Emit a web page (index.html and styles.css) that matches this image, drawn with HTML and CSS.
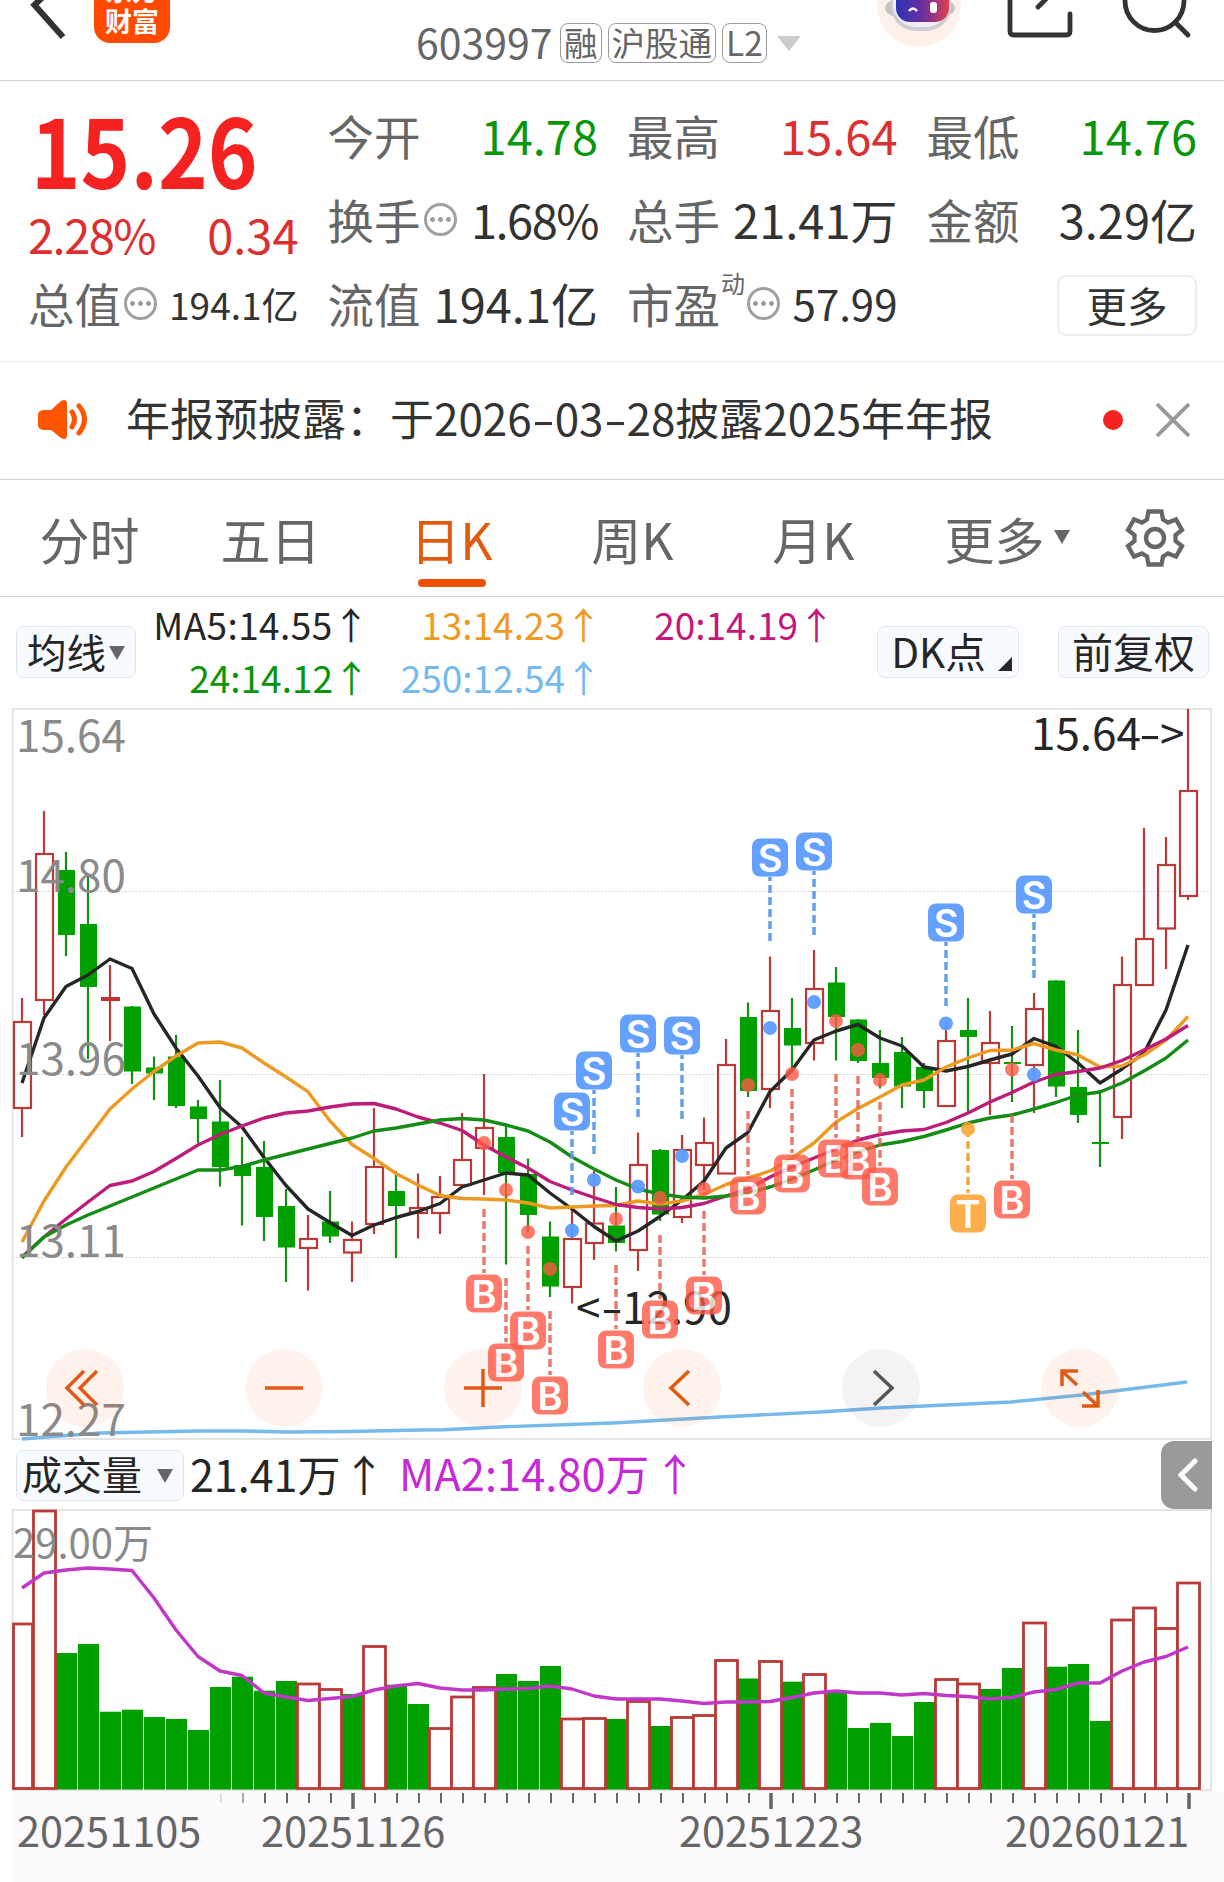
FILE: index.html
```html
<!DOCTYPE html>
<html lang="zh-CN">
<head>
    <meta charset="UTF-8">
    <meta name="viewport" content="width=device-width, initial-scale=1.0">
    <title>603997</title>
    <link rel="stylesheet" href="styles.css">
</head>
<body>
    <header class="topbar">
        <svg class="back" width="52" height="80" viewBox="0 0 52 80"><path d="M45 -22 L17.500 5 L46 37" /></svg>
        <div class="logo">东方<br>财富</div>
        <div class="stock">
            <span class="code">603997</span>
            <span class="tag">融</span>
            <span class="tag">沪股通</span>
            <span class="tag">L2</span>
            <i class="tri tri-light"></i>
        </div>
        <svg class="tools" width="324" height="80" viewBox="876 0 324 80">
            <defs>
                <linearGradient id="visor" x1="0" x2="1" y1="0" y2="0">
                    <stop offset="0" stop-color="#2a35b5" />
                    <stop offset=".5" stop-color="#6a2da0" />
                    <stop offset="1" stop-color="#e0404e" />
                </linearGradient>
            </defs>
            <circle cx="919" cy="5" r="42" fill="#fff0e9" />
            <ellipse cx="920" cy="8" rx="35" ry="13" fill="#c4c0c8" />
            <rect x="891" y="-28" width="60" height="59" rx="25" fill="#cfccd3" />
            <rect x="893" y="-28" width="56" height="55" rx="23" fill="#efedf2" />
            <rect x="896" y="-16" width="53" height="38" rx="14" fill="url(#visor)" />
            <path d="M909 11 Q913 6 917 11" fill="none" stroke="#fff" stroke-width="2.5" />
            <rect x="930" y="2" width="7" height="11" rx="3" fill="#fff" />
            <g class="tool-line">
                <path d="M1010 -6 V31 Q1010 35 1014 35 H1066 Q1070 35 1070 31 V14" />
                <path d="M1038 7 L1056 -11" />
                <circle cx="1154.500" cy="1" r="29.500" />
                <path d="M1175 22 L1188 35" />
            </g>
        </svg>
    </header>

    <section class="quote">
        <div class="price-box">
            <div class="price">15.26</div>
            <div class="change"><span class="pct">2.28%</span><span>0.34</span></div>
        </div>
        <div class="cell"><label>今开</label><b class="down">14.78</b></div>
        <div class="cell"><label>最高</label><b class="up">15.64</b></div>
        <div class="cell"><label>最低</label><b class="down">14.76</b></div>
        <div class="cell"><label>换手</label><i class="more"></i><b class="pct">1.68%</b></div>
        <div class="cell"><label>总手</label><b>21.41万</b></div>
        <div class="cell"><label>金额</label><b>3.29亿</b></div>
        <div class="cell"><label>总值</label><i class="more"></i><b class="small">194.1亿</b></div>
        <div class="cell"><label>流值</label><b>194.1亿</b></div>
        <div class="cell"><label>市盈</label><sup>动</sup><i class="more"></i><b class="mid">57.99</b></div>
        <div class="cell"><button class="more-btn">更多</button></div>
    </section>

    <section class="notice">
        <svg width="52" height="42" viewBox="0 0 52 42">
            <path d="M8 11 H14 L24 2 Q30 -1 30 5 V36 Q30 42 24 39 L14 31 H8 Q1 31 1 26 V16 Q1 11 8 11Z" fill="#ff5500" />
            <path d="M35 13 Q40 20 35 28 M42 7 Q53 20 42 34" fill="none" stroke="#ff5500" stroke-width="5" stroke-linecap="round" />
        </svg>
        <p>年报预披露：于2026<i>-</i>03<i>-</i>28披露2025年年报</p>
        <span class="dot"></span>
        <svg width="34" height="34" viewBox="0 0 34 34"><path d="M1 1 L33 33 M33 1 L1 33" stroke="#999" stroke-width="3.800" /></svg>
    </section>

    <nav class="tabs">
        <a>分时</a>
        <a>五日</a>
        <a class="active">日K</a>
        <a>周K</a>
        <a>月K</a>
        <a class="drop">更多<i class="tri"></i></a>
        <svg width="60" height="60" viewBox="-30 -30 60 60">
            <path d="M-6.500 -26.500 H6.500 L8 -18.500 L13 -15.500 L21 -18.500 L27 -8 L20.500 -3 V3 L27 8 L21 18.500 L13 15.500 L8 18.500 L6.500 26.500 H-6.500 L-8 18.500 L-13 15.500 L-21 18.500 L-27 8 L-20.500 3 V-3 L-27 -8 L-21 -18.500 L-13 -15.500 L-8 -18.500 Z" />
            <circle r="9" />
        </svg>
    </nav>

    <section class="legend">
        <button class="chip">均线<i class="tri"></i></button>
        <div class="ma-list">
            <span class="ma5">MA5:14.55↑</span>
            <span class="ma13">13:14.23↑</span>
            <span class="ma20">20:14.19↑</span>
            <span class="ma24">24:14.12↑</span>
            <span class="ma250">250:12.54↑</span>
        </div>
        <button class="chip dk">DK点<i class="corner"></i></button>
        <button class="chip fq">前复权</button>
    </section>

    <section class="kline">
        <svg id="kline" width="1224" height="741" viewBox="0 700 1224 741"></svg>
        <div class="controls">
            <button><svg viewBox="-39 -39 78 78"><path d="M-1 -17 L-18 0 L-1 17 M12 -17 L-5 0 L12 17" /></svg></button>
            <button><svg viewBox="-39 -39 78 78"><path d="M-19 0 H19" /></svg></button>
            <button><svg viewBox="-39 -39 78 78"><path d="M-19 0 H19 M0 -19 V19" /></svg></button>
            <button><svg viewBox="-39 -39 78 78"><path d="M7 -17 L-11 0 L7 17" /></svg></button>
            <button class="off"><svg viewBox="-39 -39 78 78"><path d="M-7 -17 L11 0 L-7 17" /></svg></button>
            <button><svg viewBox="-39 -39 78 78"><path d="M-2 -17 H-18 V-2 M-18 -17 L-3 -3 M2 18 H18 V2 M18 18 L3 4" /></svg></button>
        </div>
    </section>

    <section class="vol-head">
        <button class="chip">成交量<i class="tri"></i></button>
        <span class="vol">21.41万<i>↑</i></span>
        <span class="vol-ma">MA2:14.80万<i>↑</i></span>
        <button class="fold"><svg width="51" height="68" viewBox="0 0 51 68"><path d="M34 20 L20 34 L34 48" /></svg></button>
    </section>
    <svg id="volume" width="1224" height="373" viewBox="0 1509 1224 373"></svg>

    <script src="chart.js"></script>
</body>
</html>
```
FILE: styles.css
```css
*{
    margin: 0;
    padding: 0;
    box-sizing: border-box;
}
body{
    width: 1224px;
    height: 1882px;
    overflow: hidden;
    background: #fff;
    color: #333;
    font-family: "Noto Sans CJK SC", "Noto Sans", sans-serif;
}
button{
    font-family: inherit;
    border: 0;
}
svg{
    display: block;
}
i, b, label{
    font-style: normal;
    font-weight: 400;
}
.tri{
    display: inline-block;
    border: 8.5px solid transparent;
    border-top: 14px solid #666;
    border-bottom: 0;
}
.tri-light{
    border-width: 15px 12px 0;
    border-top-color: #ccc;
    margin-left: 4px;
}

/* top bar, scrolled a little under the screen edge */
.topbar{
    display: flex;
    height: 81px;
    padding-left: 17px;
    border-bottom: 1px solid #d2d2d2;
    overflow: hidden;
}
.back path{
    fill: none;
    stroke: #333;
    stroke-width: 6.2;
}
.logo{
    width: 76px;
    height: 76px;
    margin: -33px 0 0 25px;
    padding-top: 7px;
    border-radius: 16px;
    background: #ff4a00;
    color: #fff;
    font-size: 27px;
    font-weight: 700;
    line-height: 31px;
    text-align: center;
}
.stock{
    display: flex;
    align-items: center;
    gap: 6px;
    width: 458px;
    height: 86px;
    margin-left: 246px;
    color: #666;
}
.code{
    width: 138px;
    padding-bottom: 4px;
    font-size: 41px;
}
.tag{
    height: 40px;
    padding: 0 3px;
    border: 1.5px solid #999;
    border-radius: 8px;
    font-size: 33.5px;
    line-height: 35px;
    white-space: nowrap;
}
.tools{
    margin-left: 2px;
}
.tool-line{
    fill: none;
    stroke: #333;
    stroke-width: 4.8;
    stroke-linecap: round;
}

.quote{
    display: grid;
    grid-template-columns: repeat(4, 270.5px);
    grid-template-rows: repeat(3, 84px);
    column-gap: 29px;
    height: 281px;
    padding: 14px 27px 14px 28px;
    border-bottom: 1px solid #ececec;
}
.price-box{
    grid-row: span 2;
    color: #dc2f2f;
}
.price{
    height: 106px;
    padding-left: 3px;
    color: #f52222;
    font-size: 95px;
    font-weight: 700;
    line-height: 105px;
    transform: scaleX(.89);
    transform-origin: left;
}
.change{
    display: flex;
    justify-content: space-between;
    font-size: 47px;
    line-height: 66px;
}
.cell{
    display: flex;
    align-items: center;
    font-size: 46.5px;
    white-space: nowrap;
}
.cell label, .cell b{
    padding-bottom: 5px;
}
.cell label{
    color: #666;
}
.cell b{
    margin-left: auto;
    font-size: 47px;
}
.cell b.small{
    padding-bottom: 2px;
    font-size: 37px;
}
.cell b.mid{
    font-size: 42px;
}
.pct, .cell b.pct{
    letter-spacing: -1.5px;
}
.cell sup{
    align-self: flex-start;
    margin: 2px 2px 0 1px;
    color: #666;
    font-size: 24px;
}
.cell .up{
    color: #dc2f2f;
}
.cell .down{
    color: #0a960a;
}
.more{
    width: 33px;
    height: 33px;
    margin: -3px 0 0 3px;
    border: 3px solid #a0a0a0;
    border-radius: 50%;
    background:
        radial-gradient(circle at 5.5px 13.5px, #999 2px, transparent 2.7px),
        radial-gradient(circle at 13.5px 13.5px, #999 2px, transparent 2.7px),
        radial-gradient(circle at 21.5px 13.5px, #999 2px, transparent 2.7px);
}
.cell sup + .more{
    margin-left: 0;
}
.more-btn{
    width: 140px;
    height: 61px;
    margin-left: auto;
    border: 2px solid #ececec;
    border-radius: 9px;
    background: #fff;
    color: #333;
    font-size: 40.5px;
    line-height: 50px;
}

.notice{
    display: flex;
    align-items: center;
    height: 118px;
    padding-left: 37px;
    border-bottom: 1px solid #d2d2d2;
    font-size: 44px;
}
.notice svg, .dot{
    position: relative;
    top: -1px;
}
.notice p{
    width: 977px;
    margin-left: 37px;
    padding-bottom: 7px;
    white-space: nowrap;
}
.notice p i{
    display: inline-block;
    width: 23px;
    text-align: center;
    transform: scaleX(1.5);
}
.dot{
    width: 20px;
    height: 20px;
    margin-right: 33px;
    border-radius: 50%;
    background: #f52222;
}

.tabs{
    display: grid;
    grid-template-columns: repeat(6, 181px) 1fr;
    align-items: center;
    height: 117px;
    border-bottom: 1px solid #d2d2d2;
    color: #666;
    font-size: 50px;
    line-height: 110px;
    text-align: center;
}
.tabs a{
    position: relative;
    left: -1px;
}
.tabs .active{
    color: #e35a0d;
}
.active::after{
    content: "";
    position: absolute;
    left: 57px;
    bottom: 6px;
    width: 68px;
    height: 8px;
    border-radius: 4px;
    background: #ef5000;
}
.drop .tri{
    position: absolute;
    right: 15px;
    top: 47px;
}
.tabs svg{
    margin-left: 39px;
    fill: none;
    stroke: #666;
    stroke-width: 4.3;
}

.chip{
    display: flex;
    align-items: center;
    justify-content: center;
    height: 52px;
    padding-bottom: 4px;
    border: 1.5px solid #e2e4ec;
    border-radius: 8px;
    background: #f7faff;
    color: #262626;
    font-size: 39.5px;
    white-space: nowrap;
}
.chip .tri{
    margin-top: 5px;
}
.legend{
    display: flex;
    height: 103px;
    padding: 3px 0 0 16px;
}
.legend .chip{
    width: 120px;
    margin-top: 26px;
}
.legend .chip .tri{
    margin-left: 3px;
}
.ma-list{
    display: grid;
    grid-template-columns: 234px 232px 233px;
    grid-template-rows: 53px 53px;
    width: 741px;
    font-size: 37px;
    line-height: 49px;
    text-align: right;
}
.ma5{ color: #262626; letter-spacing: .4px; }
.ma13{ color: #ee9a22; }
.ma20{ color: #c2187c; }
.ma24{ color: #0a960a; }
.ma250{ color: #76b9ec; }
.legend .dk{
    position: relative;
    width: 142px;
    padding-right: 19px;
    font-size: 40.5px;
}
.legend .fq{
    width: 151px;
    margin-left: 39px;
    font-size: 41px;
}
.corner{
    position: absolute;
    right: 6px;
    bottom: 6px;
    border-left: 14px solid transparent;
    border-bottom: 14px solid #262626;
}

.kline{
    position: relative;
    height: 741px;
}
.controls{
    position: absolute;
    left: 46px;
    bottom: 14px;
    display: flex;
    gap: 121px;
}
.controls button{
    width: 78px;
    height: 78px;
    border-radius: 50%;
    background: rgba(255, 80, 10, .075);
}
.controls .off{
    background: rgba(80, 40, 110, .06);
}
.controls path{
    fill: none;
    stroke: #e05a14;
    stroke-width: 3.5;
}
.controls .off path{
    stroke: #555;
}

.vol-head{
    display: flex;
    align-items: center;
    height: 68px;
    padding-left: 16px;
    font-size: 43px;
    white-space: nowrap;
}
.vol-head .chip{
    width: 168px;
    height: 51px;
    padding-right: 5px;
    font-size: 40px;
}
.vol-head .chip .tri{
    margin-left: 15px;
}
.vol{
    width: 209px;
    margin-left: 6px;
    padding-bottom: 5px;
    color: #262626;
}
.vol i{
    margin-left: 2px;
}
.vol-ma{
    padding-bottom: 5px;
    color: #c42bd6;
    font-size: 43.500px;
}
.vol-ma i{
    margin-left: 4px;
}
.fold{
    width: 51px;
    height: 68px;
    margin: 0 12px 0 auto;
    border-radius: 13px 0 0 13px;
    background: #9b999c;
}
.fold path{
    fill: none;
    stroke: #fff;
    stroke-width: 5;
    stroke-linecap: round;
}

/* text inside the charts */
.axis{
    fill: #8a8a8a;
    font-size: 44px;
}
.peak{
    fill: #262626;
    font-size: 44px;
}
.axis-vol{
    fill: #8a8a8a;
    font-size: 40px;
}
.date{
    fill: #666;
    font-size: 41.500px;
}
.mark{
    fill: #fff;
    font-family: Inter, sans-serif;
    font-size: 38px;
    font-weight: 600;
    text-anchor: middle;
}
.line{
    fill: none;
    stroke-width: 3.4;
    stroke-linejoin: round;
}
```
FILE: chart.js
```js
const STEP = 22
const RED = "#b93a36"
const GREEN = "#00a000"

// color, high, body top, body bottom, low
const candles = [
    ["r", 998, 1022, 1108, 1137], ["r", 811, 854, 1000, 1015], ["g", 852, 870, 935, 956],
    ["g", 876, 924, 987, 1059], ["d", 965, 997, 1001, 1041], ["g", 1006, 1006.5, 1071.5, 1084],
    ["g", 1056.5, 1067.5, 1073.5, 1100], ["g", 1035, 1056.5, 1106, 1108], ["g", 1100, 1106.5, 1119, 1143],
    ["g", 1080, 1121.5, 1167, 1186.5], ["g", 1137, 1165, 1176, 1225.5], ["g", 1141, 1167, 1217, 1241],
    ["g", 1189, 1206, 1247.5, 1282], ["r", 1215, 1239, 1248, 1290.5], ["g", 1191, 1221.5, 1236.5, 1243],
    ["r", 1221.5, 1240, 1252.5, 1282], ["r", 1108, 1167, 1224, 1234], ["g", 1171, 1191, 1206, 1258],
    ["r", 1173.5, 1208, 1213, 1238.5], ["r", 1176, 1197, 1213, 1234], ["r", 1113, 1160, 1185, 1185],
    ["r", 1074, 1128, 1148, 1195], ["g", 1126, 1137, 1173, 1264.5], ["g", 1158.5, 1174, 1215, 1232],
    ["g", 1221.5, 1236.5, 1286.5, 1297], ["r", 1208, 1239, 1287, 1303.5], ["r", 1171, 1223.5, 1243, 1260],
    ["g", 1187, 1225.5, 1243, 1251.5], ["r", 1132.5, 1165, 1250, 1271], ["g", 1149, 1150, 1214.5, 1221],
    ["r", 1135, 1150, 1217, 1223], ["r", 1117.5, 1143, 1165, 1190], ["r", 1039, 1065, 1173.5, 1173.5],
    ["g", 1002.5, 1017, 1091, 1097], ["r", 956.5, 1011, 1089, 1108], ["g", 998, 1028, 1045.5, 1073],
    ["r", 950, 989, 1043, 1060.5], ["g", 967, 982.5, 1017, 1060.5], ["g", 1019, 1019.5, 1061, 1063],
    ["g", 1030, 1063, 1078, 1088.5], ["g", 1037, 1052, 1086.5, 1108], ["g", 1063, 1067, 1091, 1108],
    ["r", 1022, 1041, 1106, 1106], ["g", 998, 1030, 1037, 1113], ["r", 1011, 1043, 1063, 1115],
    ["g", 1026, 1062, 1064, 1102], ["r", 993, 1009, 1065, 1113], ["g", 980, 980.5, 1086.5, 1097],
    ["g", 1030, 1087, 1115, 1123], ["g", 1090, 1142, 1144, 1167], ["r", 956.5, 985, 1117, 1139],
    ["r", 828, 939, 985, 985], ["r", 837, 865, 928.5, 969], ["r", 709, 791, 896, 900]
]

const averages = [
    ["#262626", [1083, 1018, 986.5, 975, 959, 968.5, 1014, 1048, 1076, 1107.5, 1127, 1157.5, 1185.5, 1209, 1222.5, 1235.5, 1225, 1217.5, 1211.5, 1203.5, 1187, 1180, 1173, 1175, 1193, 1209, 1226.5, 1241, 1231, 1216.5, 1200, 1181, 1148, 1132.5, 1091.5, 1070, 1040, 1031, 1024.5, 1038, 1046, 1067, 1071, 1066.5, 1060, 1054, 1038.5, 1046.5, 1063, 1083, 1069, 1053, 1010, 945]],
    ["#ee9a22", [1242, 1201, 1167, 1138, 1109, 1089, 1071.5, 1056, 1043, 1042, 1048, 1063, 1077, 1091.7, 1121, 1144.5, 1158.5, 1173.5, 1185, 1195.5, 1198.5, 1199, 1200, 1203, 1208, 1207, 1206, 1205.5, 1201, 1204, 1201, 1194.5, 1184.5, 1178, 1171, 1158, 1143, 1122, 1108.5, 1097, 1085, 1080, 1067, 1058, 1050.5, 1050, 1043.5, 1050, 1055, 1067, 1066, 1055, 1040, 1016.5]],
    ["#bd1c7a", [1257, 1237, 1219, 1202, 1185.5, 1181, 1171.5, 1158.5, 1145, 1134.5, 1126, 1118, 1113, 1111, 1107, 1104, 1103.5, 1109, 1117, 1123, 1130.5, 1145, 1157, 1168, 1181.5, 1190, 1197.5, 1204.5, 1207.5, 1209, 1207.5, 1203.5, 1196, 1189, 1177, 1167, 1158, 1149, 1140, 1134.5, 1131, 1129.5, 1122.5, 1113, 1102, 1092.5, 1082, 1074.5, 1071.5, 1068, 1060.5, 1050, 1039, 1025.5]],
    ["#158c15", [1258, 1237, 1225, 1215, 1206, 1197, 1188, 1179, 1170, 1170, 1166.5, 1160, 1154.5, 1149, 1143.5, 1138, 1131, 1128, 1124, 1120, 1118.5, 1120, 1125, 1131, 1142, 1157, 1169, 1180, 1189, 1194, 1197, 1198, 1196, 1193, 1187, 1179, 1170, 1160, 1152, 1145, 1141.5, 1136.5, 1130, 1123, 1118, 1115, 1109, 1102.5, 1095, 1092, 1083, 1071, 1058, 1040]]
]
const yearLine = "22,1439 60,1436 100,1433 197,1431 242,1431 287,1432 350,1431.500 420,1430 443,1429.7 505,1426.7 613,1423 720,1417 820,1412 881,1408 1011,1402 1084,1394.7 1187,1382"

// letter, candle index, badge y, dot y
const marks = [
    ["S", 25, 1111, 1230.5], ["S", 26, 1070, 1180], ["S", 28, 1033, 1186.5], ["S", 30, 1035, 1156],
    ["S", 34, 857, 1028], ["S", 36, 851, 1002], ["S", 42, 922, 1023.5], ["S", 46, 894, 1074.5],
    ["B", 21, 1293, 1143], ["B", 22, 1362, 1190], ["B", 23, 1330, 1232], ["B", 24, 1395, 1269],
    ["B", 27, 1349, 1219], ["B", 29, 1319, 1198], ["B", 31, 1295, 1189], ["B", 33, 1195, 1085],
    ["B", 35, 1173, 1074], ["B", 37, 1158, 1021], ["B", 38, 1160, 1050], ["B", 39, 1186, 1080],
    ["T", 43, 1213, 1129], ["B", 45, 1199, 1069.5]
]
const markColor = { S: "#5a9bff", B: "#ff5a45", T: "#ffa02c" }
const markAlpha = { S: .94, B: .8, T: .85 }

// color, bar top
const volumes = [
    ["r", 1624], ["r", 1511], ["g", 1653], ["g", 1644], ["g", 1711.7], ["g", 1709.7], ["g", 1717], ["g", 1719], ["g", 1730],
    ["g", 1687], ["g", 1676.7], ["g", 1690.7], ["g", 1681], ["r", 1684], ["r", 1689.5], ["g", 1694], ["r", 1646.5], ["g", 1684.7],
    ["g", 1704], ["r", 1728.5], ["r", 1697], ["r", 1687.5], ["g", 1674], ["g", 1681], ["g", 1666], ["r", 1719], ["r", 1718.5],
    ["g", 1719], ["r", 1701.5], ["g", 1726], ["r", 1717.5], ["r", 1715.5], ["r", 1660.5], ["g", 1678.5], ["r", 1661.5], ["g", 1681.7],
    ["r", 1674.5], ["g", 1692], ["g", 1728], ["g", 1723], ["g", 1736], ["g", 1702], ["r", 1679.5], ["r", 1684], ["g", 1689],
    ["g", 1668], ["r", 1623], ["g", 1666.7], ["g", 1664], ["g", 1721], ["r", 1620], ["r", 1608], ["r", 1628.5], ["r", 1583]
]
const volumeAverage = [1588, 1573, 1570, 1568, 1569, 1570.5, 1598, 1630, 1656.5, 1671, 1675.5, 1693, 1697, 1700.5, 1698.5, 1696.5, 1690, 1686, 1683.5, 1688, 1690, 1690, 1689, 1688.5, 1686, 1689, 1696, 1699, 1699, 1699, 1701, 1703.5, 1702, 1702, 1701.5, 1697.5, 1693, 1691, 1693, 1693, 1695, 1693.5, 1695.5, 1696.5, 1699, 1697.5, 1692, 1689.5, 1683, 1683, 1671, 1662, 1656.5, 1647]

const xAt = i => STEP + i * STEP
const points = list => list.map((y, i) => xAt(i) + "," + y).join(" ")
const rect = (x, y, w, h, extra) => `<rect x="${x}" y="${y}" width="${w}" height="${h}" ${extra} />`
const line = (x1, y1, x2, y2, color, w, extra = "") =>
    `<line x1="${x1}" y1="${y1}" x2="${x2}" y2="${y2}" stroke="${color}" stroke-width="${w}" ${extra} />`
const text = (x, y, cls, str) => `<text x="${x}" y="${y}" class="${cls}">${str}</text>`

function drawCandle([type, high, top, bottom, low], i) {
    const x = xAt(i)
    const color = type == "g" ? "#129012" : RED
    let out = ""
    if (type == "r") {
        out += line(x, high, x, top, color, 2.2) + line(x, bottom, x, low, color, 2.2)
        out += rect(x - 8, top, 17, bottom - top, `fill="none" stroke="${color}" stroke-width="2.2"`)
    } else {
        out += line(x, high, x, low, color, 2.2)
        if (type == "d") out += rect(x - 9, top, 19, bottom - top, `fill="#c5322f"`)
        else out += rect(x - 8, top, 17, bottom - top, `fill="${GREEN}"`)
    }
    return out
}

function drawMark([letter, i, y, dot]) {
    const x = xAt(i)
    const color = markColor[letter]
    const dir = letter == "S" ? 1 : -1
    return `<g opacity="${markAlpha[letter]}">`
        + line(x, y + dir * 84, x, y + dir * 20, letter == "S" ? "#5c9be4" : letter == "B" ? "#e65c4c" : "#ee9a22", 3.5, `stroke-dasharray="8 4"`)
        + `<circle cx="${x}" cy="${dot}" r="7" fill="${color}" />`
        + rect(x - 18, y - 18.5, 36, 38, `rx="8" fill="${color}"`)
        + text(x, y + 14.5, "mark", letter)
        + `</g>`
}

function drawKline() {
    let out = rect(12.5, 709, 1198.5, 730, `fill="none" stroke="#e2e2e2" stroke-width="1.8"`)
    for (const y of [891.5, 1074.5, 1257.5]) {
        out += line(13, y, 1211, y, "#d4d4d4", 1, `stroke-dasharray="2 1.5"`)
    }
    out += candles.map(drawCandle).join("")
    for (const [color, list] of averages) {
        out += `<polyline class="line" points="${points(list)}" stroke="${color}" />`
    }
    out += `<polyline class="line" points="${yearLine}" stroke="#76b9ec" />`
    out += text(16, 752, "axis", "15.64") + text(16, 892, "axis", "14.80") + text(16, 1075, "axis", "13.96")
        + text(16, 1257, "axis", "13.11") + text(16, 1436, "axis", "12.27")
    out += text(1031, 750, "peak", `15.64<tspan x="1139" textLength="22" lengthAdjust="spacingAndGlyphs">-</tspan><tspan x="1160">&gt;</tspan>`)
    out += text(576, 1324, "peak", `&lt;<tspan x="601" textLength="22" lengthAdjust="spacingAndGlyphs">-</tspan><tspan x="622">12.90</tspan>`)
    out += marks.map(drawMark).join("")
    document.getElementById("kline").innerHTML = out
}

function drawVolume() {
    let out = rect(12, 1791, 1212, 91, `fill="#fdfafe"`)
    out += rect(12.5, 1510, 1198.5, 280, `fill="none" stroke="#e2e2e2" stroke-width="1.8"`)
    volumes.forEach(([type, top], i) => {
        const x = xAt(i)
        if (type == "g") out += rect(x - 10, top, 21, 1789.5 - top, `fill="${GREEN}"`)
    })
    volumes.forEach(([type, top], i) => {
        const x = i == 0 ? 13.5 : xAt(i) - 10.5
        const w = i == 0 ? 19 : 22
        if (type == "r") out += rect(x, top, w, 1788.5 - top, `fill="#fff" stroke="${RED}" stroke-width="2.8"`)
    })
    out += `<polyline class="line" points="${points(volumeAverage)}" stroke="#c236c8" />`
    out += text(13, 1558, "axis-vol", "29.00万")
    for (let i = 9; i < 54; i++) {
        const big = i == 15 || i == 34 || i == 53
        const color = i == 9 ? "#ddd" : i == 10 ? "#aaa" : "#666"
        out += line(xAt(i) + 1, 1793, xAt(i) + 1, big ? 1809 : 1803, color, big ? 3.5 : 2)
    }
    out += text(17, 1847, "date", "20251105") + text(261, 1847, "date", "20251126")
        + text(679, 1847, "date", "20251223") + text(1005, 1847, "date", "20260121")
    document.getElementById("volume").innerHTML = out
}

drawKline()
drawVolume()
```
